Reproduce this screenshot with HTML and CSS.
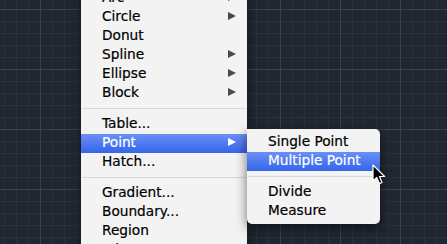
FILE: index.html
```html
<!DOCTYPE html>
<html lang="en">
<head>
  <meta charset="UTF-8">
  <title>Draw Menu</title>
  <link rel="stylesheet" href="styles.css">
</head>
<body>
  <div class="canvas">
    <ul class="menu main-menu">
      <li class="item has-sub">Arc<span class="arrow"></span></li>
      <li class="item has-sub">Circle<span class="arrow"></span></li>
      <li class="item">Donut</li>
      <li class="item has-sub">Spline<span class="arrow"></span></li>
      <li class="item has-sub">Ellipse<span class="arrow"></span></li>
      <li class="item has-sub">Block<span class="arrow"></span></li>
      <li class="sep"></li>
      <li class="item">Table...</li>
      <li class="item has-sub active">Point<span class="arrow"></span></li>
      <li class="item">Hatch...</li>
      <li class="sep"></li>
      <li class="item">Gradient...</li>
      <li class="item">Boundary...</li>
      <li class="item">Region</li>
      <li class="item">Wipeout</li>
    </ul>

    <ul class="menu sub-menu">
      <li class="item">Single Point</li>
      <li class="item active">Multiple Point</li>
      <li class="sep"></li>
      <li class="item">Divide</li>
      <li class="item">Measure</li>
    </ul>

    <svg class="cursor" width="14" height="22" viewBox="0 0 14 22">
      <path d="M1 1 L1 17 L4.8 13.4 L7.4 19.6 L10 18.5 L7.5 12.5 L12.6 12.5 Z" fill="#000" stroke="#fff" stroke-width="1.2" stroke-linejoin="round"/>
    </svg>
  </div>
</body>
</html>
```

FILE: styles.css
```css
/* Reset */
* { box-sizing: border-box; }
html, body { margin: 0; padding: 0; overflow: hidden; }

body {
  width: 447px;
  height: 244px;
  font-family: "DejaVu Sans", sans-serif;
}

/* Drawing canvas grid */
.canvas {
  position: relative;
  width: 447px;
  height: 244px;
  background-color: #212731;
  background-image:
    linear-gradient(90deg, #3a4153 1px, transparent 1px),
    linear-gradient(#3a4153 1px, transparent 1px),
    linear-gradient(90deg, #2a303c 1px, transparent 1px),
    linear-gradient(#2a303c 1px, transparent 1px);
  background-size: 60px 100%, 100% 60px, 12px 100%, 100% 12px;
  background-position: 40px 0, 0 9px, 4px 0, 0 9px;
}

/* Menus */
.menu {
  position: absolute;
  list-style: none;
  margin: 0;
  background: #f3f3f3;
  font-size: 13.7px;
  color: #000;
  -webkit-text-stroke: 0.2px;
}

.main-menu {
  left: 81px;
  top: -11px;
  width: 166px;
  padding: 0;
  box-shadow: 0 4px 12px rgba(0,0,0,0.5);
}

.sub-menu {
  left: 247px;
  top: 129px;
  width: 133px;
  padding: 4px 0 3px;
  border-radius: 0 5px 5px 5px;
  box-shadow: 0 4px 12px rgba(0,0,0,0.55);
}

.item {
  display: flex;
  align-items: center;
  justify-content: space-between;
  height: 19px;
  line-height: 17px;
  padding: 0 11px 2px 21px;
  white-space: nowrap;
}

.item.active {
  background: linear-gradient(#6b8ff5, #3465ea);
  color: #fff;
}

.sep {
  height: 12px;
  position: relative;
}
.sep::after {
  content: "";
  position: absolute;
  left: 1px;
  right: 1px;
  top: 5px;
  height: 1px;
  background: #d9d9d9;
}

/* Submenu arrows */
.arrow {
  width: 0;
  height: 0;
  margin-bottom: 2px;
  border-left: 8px solid #4a4a4a;
  border-top: 4.5px solid transparent;
  border-bottom: 4.5px solid transparent;
}
.item.active .arrow { border-left-color: #fff; }

/* Mouse pointer */
.cursor {
  position: absolute;
  left: 372px;
  top: 164px;
}
```
